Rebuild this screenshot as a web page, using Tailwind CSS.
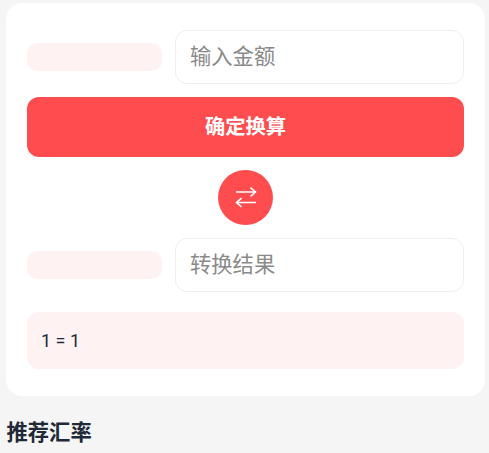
<!DOCTYPE html>
<html lang="zh-CN">
<head>
    <meta charset="UTF-8">
    <title>汇率换算</title>
    <script src="https://cdn.jsdelivr.net/npm/@tailwindcss/browser@4"></script>
</head>
<body class="bg-[#f5f5f5] h-[453px] overflow-hidden font-['Roboto','Noto_Sans_CJK_SC',sans-serif]">
    <div class="px-[6px] pt-[3px]">
        <!-- Converter card -->
        <div class="bg-white rounded-[16px] px-[21px] pt-[27px] pb-[27px] h-[393px] w-[479px]">
            <div class="flex items-center gap-[13px]">
                <div class="w-[135px] h-[28px] rounded-[10px] bg-[#fff2f2]"></div>
                <input class="w-[289px] h-[54px] rounded-[12px] border border-[#eeeeee] bg-white px-[14px] pb-[2px] text-[21.3px] placeholder-[#8a8a8a] outline-none" placeholder="输入金额">
            </div>

            <button class="mt-[13px] w-full h-[60px] rounded-[12px] bg-[#ff4d4f] text-white text-[20.3px] font-bold">确定换算</button>

            <div class="flex justify-center mt-[13px]">
                <div class="w-[55px] h-[55px] rounded-full bg-[#ff4d4f] flex items-center justify-center">
                    <svg width="22" height="21" viewBox="0 0 22 21" fill="none" stroke="white" stroke-width="1.6">
                        <path d="M1 5H20.5M15.5 .6L20.5 5L15.5 9.4"/>
                        <path d="M21 15.5H1.5M6.5 11.1L1.5 15.5L6.5 19.9"/>
                    </svg>
                </div>
            </div>

            <div class="flex items-center gap-[13px] mt-[13px]">
                <div class="w-[135px] h-[28px] rounded-[10px] bg-[#fff2f2]"></div>
                <input class="w-[289px] h-[54px] rounded-[12px] border border-[#eeeeee] bg-white px-[14px] pb-[2px] text-[21.3px] placeholder-[#8a8a8a] outline-none" placeholder="转换结果" readonly>
            </div>

            <div class="mt-[20px] h-[57px] rounded-[12px] bg-[#fff2f2] px-[14px] flex items-center text-[18px] text-[#1f2937]">1 = 1</div>
        </div>

        <h2 class="mt-[23px] ml-[0.5px] text-[21.3px] leading-[28px] font-bold text-[#1f2937]">推荐汇率</h2>
    </div>
</body>
</html>
